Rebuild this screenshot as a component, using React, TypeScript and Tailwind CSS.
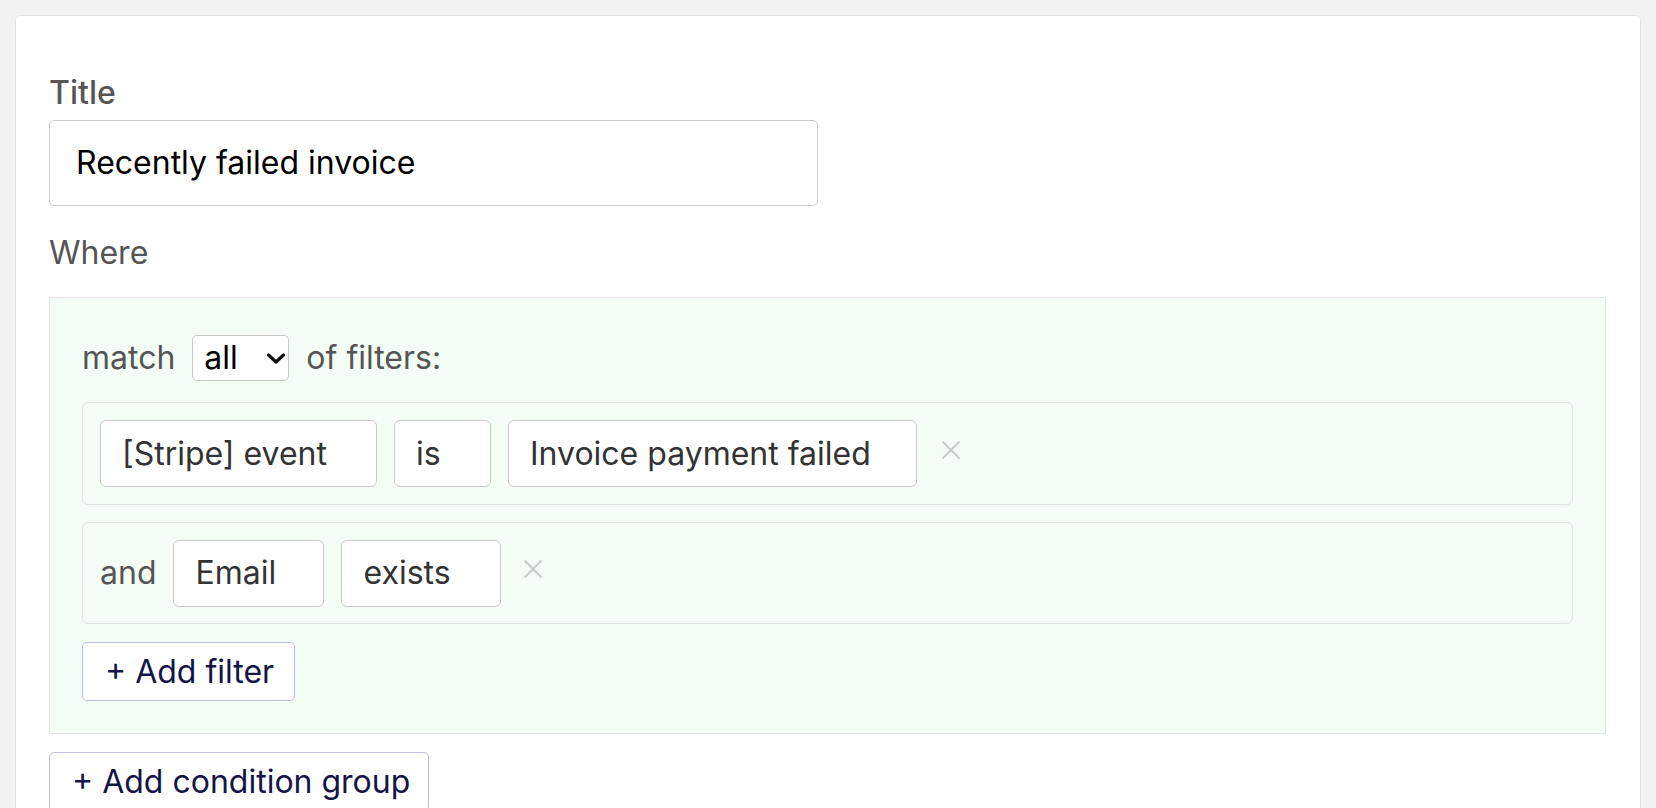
/**
 * Segment editor — title + condition group with filters.
 */

const font = { fontFamily: 'Inter, "Noto Sans", sans-serif' };

const X = () => (
  <svg width="20" height="20" viewBox="0 0 20 20" className="shrink-0">
    <path d="M2 2 L18 18 M18 2 L2 18" stroke="#c9c9c9" strokeWidth="1.8" strokeLinecap="round" />
  </svg>
);

const Field = ({ text, w }: { text: string; w: string }) => (
  <div className={`${w} h-[67px] flex items-center pl-[21px] bg-white border border-[#c9c9c9] rounded-[6px] text-[#333] shrink-0`}>
    {text}
  </div>
);

const App = () => {
  return (
    <div className="min-h-screen bg-[#f2f2f2] p-[15px] overflow-hidden" style={font}>
      <div className="bg-white border border-[#e4e4e4] rounded-[6px] pl-[33px] pt-[59px] pb-[60px] text-[32px] leading-[36px]">
        <div className="text-[#555] font-medium">Title</div>
        <div className="mt-[9px] w-[769px] h-[86px] flex items-center pl-[26px] border border-[#ccc] rounded-[5px] text-black">
          Recently failed invoice
        </div>
        <div className="mt-[29px] text-[#555]">Where</div>

        <div className="mt-[26px] w-[1557px] border border-[#e6e6e6] bg-[#f4fdf5] pl-[32px] pr-[32px] pt-[37px] pb-[32px]">
          {/* match line */}
          <div className="flex items-center gap-[17px] text-[#555] h-[46px]">
            <span>match</span>
            <div className="w-[97px] h-[46px] bg-white border border-[#c9c9c9] rounded-[5px] flex items-center pl-[11px] text-black">
              <span>all</span>
              <svg width="20" height="14" viewBox="0 0 20 14" className="ml-[28px] mt-[2px]">
                <path d="M2.5 3 L10 10 L17.5 3" stroke="#111" strokeWidth="3.2" fill="none" strokeLinecap="round" strokeLinejoin="round" />
              </svg>
            </div>
            <span>of filters:</span>
          </div>

          {/* filter 1 */}
          <div className="mt-[21px] h-[103px] border border-[#dde3de] rounded-[6px] flex items-center px-[17px] gap-[17px]">
            <Field text="[Stripe] event" w="w-[277px]" />
            <Field text="is" w="w-[97px]" />
            <Field text="Invoice payment failed" w="w-[409px]" />
            <div className="ml-[7px] -mt-[8px]"><X /></div>
          </div>

          {/* filter 2 */}
          <div className="mt-[17px] h-[102px] border border-[#dde3de] rounded-[6px] flex items-center px-[17px] gap-[17px]">
            <span className="text-[#555]">and</span>
            <Field text="Email" w="w-[151px]" />
            <Field text="exists" w="w-[160px]" />
            <div className="ml-[5px] -mt-[8px]"><X /></div>
          </div>

          <div className="mt-[18px] w-[213px] h-[59px] bg-white border border-[#bdbfdc] rounded-[5px] flex items-center pl-[22px] text-[#141447]">
            + Add filter
          </div>
        </div>

        <div className="mt-[18px] w-[380px] h-[59px] bg-white border border-[#bdbfdc] rounded-[5px] flex items-center pl-[22px] text-[#141447]">
          + Add condition group
        </div>
      </div>
    </div>
  );
};

export default App;
